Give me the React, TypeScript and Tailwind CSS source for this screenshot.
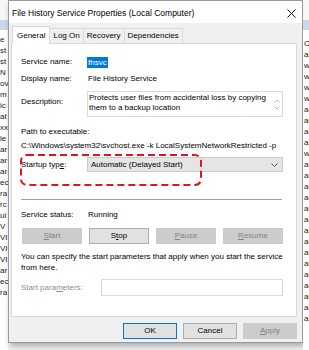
import React from 'react';

const leftRows = ['e', 'st', 'st', 'N', 'ov', 'm', 'ic', 'at', 'xx', 'le', 'ar', 'ar', 'ar', 'ec', 'ra', 'rc', 'ui', 'V', 'VI', 'VI', 'VI', 'ar', 'ec', 'ra'];
const rightRows = ['O', 'al', 'w', 'w', 'w', 'w', 'al', 'al', 'al', 'al', 'w', 'al', 'al', 'al', 'al', 'al', 'al', 'al', 'al', 'al', 'al', 'al', 'al', 'al', 'al', 'al'];

function Btn({ label, disabled, def }: { label: React.ReactNode; disabled?: boolean; def?: boolean }) {
  return (
    <div
      className={`h-[16px] flex items-center justify-center border text-[8px] ${
        def
          ? 'border-[#0078d7] bg-[#e1e1e1] text-black'
          : disabled
          ? 'border-[#cccccc] bg-[#cccccc] text-[#838383]'
          : 'border-[#adadad] bg-[#e1e1e1] text-black'
      }`}
    >
      {label}
    </div>
  );
}

export default function App() {
  return (
    <div
      className="w-[309px] h-[350px] bg-[#f3f3f3] flex overflow-hidden text-black"
      style={{ fontFamily: '"Liberation Sans", Arial, sans-serif' }}
    >
      {/* window behind, left */}
      <div className="w-[8px] shrink-0 flex flex-col overflow-hidden bg-white">
        <div className="h-[20px] bg-[#f7f7f7]" />
        <div className="h-[10px] bg-[#c9d8ea]" />
        <div className="flex flex-col pt-[4px] text-[8px] leading-[11px] text-[#222]">
          {leftRows.map((r, i) => (
            <div key={i} className="whitespace-nowrap">{r}</div>
          ))}
        </div>
      </div>

      {/* dialog */}
      <div className="w-[295px] h-[343px] shrink-0 flex flex-col bg-[#f0f0f0] border border-[#9a9a9a] shadow-[2px_3px_6px_rgba(0,0,0,0.3)]">
        <div className="h-[22px] bg-white flex items-center justify-between pl-[3px] pr-[5px] pt-[2px]">
          <span className="text-[8.5px]">File History Service Properties (Local Computer)</span>
          <svg width="9" height="9" viewBox="0 0 9 9" className="mr-[1px]">
            <path d="M0.5 0.5 L8.5 8.5 M8.5 0.5 L0.5 8.5" stroke="#111" strokeWidth="1" />
          </svg>
        </div>

        <div className="flex flex-col pl-[2px] pr-[5px] pt-[3px]">
          {/* tabs */}
          <div className="flex items-end h-[17px] pl-[1px] text-[8px]">
            <div className="h-[18px] px-[4px] bg-white border border-b-0 border-[#d9d9d9] flex items-center relative z-10 -mb-[1px]">
              General
            </div>
            <div className="h-[15px] px-[3px] bg-[#f0f0f0] border border-l-0 border-b-0 border-[#d9d9d9] flex items-center">Log On</div>
            <div className="h-[15px] px-[3px] bg-[#f0f0f0] border border-l-0 border-b-0 border-[#d9d9d9] flex items-center">Recovery</div>
            <div className="h-[15px] px-[3px] bg-[#f0f0f0] border border-l-0 border-b-0 border-[#d9d9d9] flex items-center">Dependencies</div>
          </div>

          {/* panel */}
          <div className="relative h-[274px] bg-white border border-[#d9d9d9] pl-[9px] pr-[13px] pt-[12px] text-[8px] flex flex-col">
            <div className="flex items-center h-[12px]">
              <span className="w-[67px]">Service name:</span>
              <span className="bg-[#0078d7] text-white px-[1px] -ml-[1px] leading-[11px]">fhsvc</span>
            </div>
            <div className="flex items-center h-[12px] mt-[5px]">
              <span className="w-[67px]">Display name:</span>
              <span>File History Service</span>
            </div>
            <div className="flex items-start mt-[6px]">
              <span className="w-[66px] pt-[5px]">Description:</span>
              <div className="flex-1 h-[26px] border border-[#d9d9d9] flex leading-[10px]">
                <div className="flex-1 pl-[1px] pt-[1px]">
                  Protects user files from accidental loss by copying them to a backup location
                </div>
                <div className="w-[10px] flex flex-col items-center justify-center gap-[3px] text-[#b8b8b8]">
                  <svg width="6" height="4" viewBox="0 0 6 4"><path d="M0.5 3.5 L3 1 L5.5 3.5" fill="none" stroke="currentColor" /></svg>
                  <svg width="6" height="4" viewBox="0 0 6 4"><path d="M0.5 0.5 L3 3 L5.5 0.5" fill="none" stroke="currentColor" /></svg>
                </div>
              </div>
            </div>
            <div className="h-[12px] flex items-center mt-[9px]">Path to executable:</div>
            <div className="h-[12px] flex items-center mt-[2px] whitespace-nowrap">
              C:\Windows\system32\svchost.exe -k LocalSystemNetworkRestricted -p
            </div>
            <div className="flex items-center mt-[5px]">
              <span className="w-[66px]">
                Startup typ<span className="underline">e</span>:
              </span>
              <div className="flex-1 h-[15px] bg-[#e5e5e5] border border-[#cccccc] flex items-center justify-between pl-[3px] pr-[4px]">
                <span>Automatic (Delayed Start)</span>
                <svg width="7" height="4" viewBox="0 0 7 4"><path d="M0.5 0.5 L3.5 3.5 L6.5 0.5" fill="none" stroke="#555" /></svg>
              </div>
            </div>

            <div className="h-[1px] bg-[#a0a0a0] mt-[27px] mr-[1px]" />

            <div className="flex items-center h-[12px] mt-[9px]">
              <span className="w-[67px]">Service status:</span>
              <span>Running</span>
            </div>
            <div className="grid grid-cols-4 gap-x-[7px] mt-[7px] pl-[1px]">
              <Btn label={<><span className="underline">S</span>tart</>} disabled />
              <Btn label={<>S<span className="underline">t</span>op</>} />
              <Btn label={<><span className="underline">P</span>ause</>} disabled />
              <Btn label={<><span className="underline">R</span>esume</>} disabled />
            </div>
            <div className="mt-[7px] leading-[11px]">
              You can specify the start parameters that apply when you start the service from here.
            </div>
            <div className="flex items-center mt-[6px]">
              <span className="w-[80px] text-[#8d8d8d]">
                Start para<span className="underline">m</span>eters:
              </span>
              <div className="flex-1 h-[17px] border border-[#d9d9d9] bg-white" />
            </div>

            {/* red dashed annotation */}
            <svg className="absolute left-[8px] top-[110px]" width="182" height="32" viewBox="0 0 182 32">
              <rect x="1" y="1" width="180" height="30" rx="6" fill="none" stroke="#e3141c" strokeWidth="2" strokeDasharray="7 4" />
            </svg>
          </div>

          {/* footer buttons */}
          <div className="flex justify-end gap-[6px] mt-[6px]">
            <div className="w-[54px]"><Btn label="OK" def /></div>
            <div className="w-[54px]"><Btn label="Cancel" /></div>
            <div className="w-[54px]"><Btn label={<><span className="underline">A</span>pply</>} disabled /></div>
          </div>
        </div>
      </div>

      {/* window behind, right */}
      <div className="flex-1 flex flex-col overflow-hidden bg-white">
        <div className="h-[20px] bg-[#f7f7f7]" />
        <div className="h-[10px] bg-[#c9d8ea]" />
        <div className="flex flex-col pt-[8px] pl-[1px] text-[8px] leading-[11px] text-[#222]">
          {rightRows.map((r, i) => (
            <div key={i} className="whitespace-nowrap">{r}</div>
          ))}
        </div>
      </div>
    </div>
  );
}
